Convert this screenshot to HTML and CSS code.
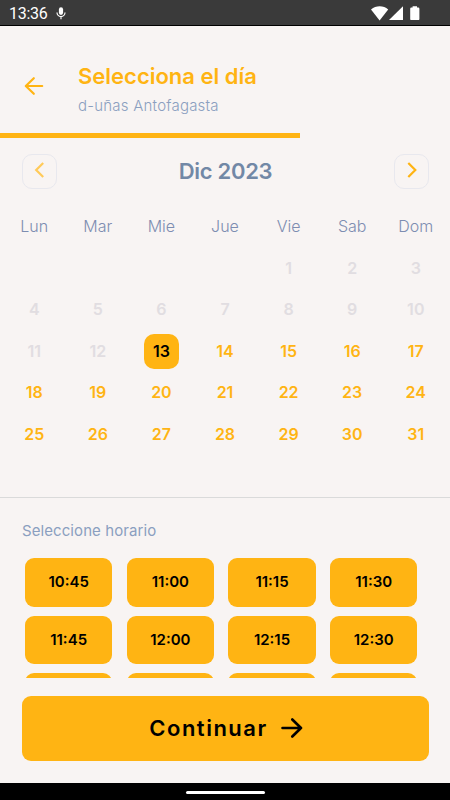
FILE: index.html
```html
<!DOCTYPE html>
<html lang="es">
  <head>
    <meta charset="utf-8">
    <title>Selecciona el día</title>
    <link rel="stylesheet" href="styles.css">
  </head>
  <body>
    <div class="status">
      <span class="clock">13:36</span>
      <svg class="mic" width="10" height="13" viewBox="0 0 10 13">
        <rect x="2.9" y="0.3" width="4.2" height="7.6" rx="2.1" fill="#fff"/>
        <path d="M1 5.6a4 4 0 0 0 8 0M5 9.6v2.6" fill="none" stroke="#fff" stroke-width="1.2"/>
      </svg>
      <svg class="signals" width="52" height="18" viewBox="0 0 52 18">
        <path d="M1 4.6C6 .2 13.5 .2 18.2 4.6L9.6 15.4z" fill="#fff"/>
        <path d="M33 1.2V15H19z" fill="#fff"/>
        <path d="M42.6 1.2h4.4v1.3h1.2q1.2 0 1.2 1.2v10.2q0 1.2-1.2 1.2h-6.8q-1.2 0-1.2-1.2V3.7q0-1.2 1.2-1.2h1.2z" fill="#fff"/>
      </svg>
    </div>

    <div class="header">
      <svg class="back" width="20" height="20" viewBox="0 0 20 20">
        <path d="M18.2 10H2M9.8 2.2L1.8 10l8 7.8" />
      </svg>
      <div>
        <h1>Selecciona el día</h1>
        <p>d-uñas Antofagasta</p>
      </div>
    </div>
    <div class="progress"></div>

    <div class="month">
      <button class="nav off"><svg width="12" height="16" viewBox="0 0 12 16"><path d="M9.2 1l-7 7 7 7"/></svg></button>
      <h2>Dic 2023</h2>
      <button class="nav"><svg width="12" height="16" viewBox="0 0 12 16"><path d="M2.3 1l7 7-7 7"/></svg></button>
    </div>

    <div class="calendar">
      <b>Lun</b><b>Mar</b><b>Mie</b><b>Jue</b><b>Vie</b><b>Sab</b><b>Dom</b>
      <i class="first">1</i><i>2</i><i>3</i>
      <i>4</i><i>5</i><i>6</i><i>7</i><i>8</i><i>9</i><i>10</i>
      <i>11</i><i>12</i><span class="today">13</span><span>14</span><span>15</span><span>16</span><span>17</span>
      <span>18</span><span>19</span><span>20</span><span>21</span><span>22</span><span>23</span><span>24</span>
      <span>25</span><span>26</span><span>27</span><span>28</span><span>29</span><span>30</span><span>31</span>
    </div>

    <div class="schedule">
      <p>Seleccione horario</p>
      <div class="hours">
        <button>10:45</button><button>11:00</button><button>11:15</button><button>11:30</button>
        <button>11:45</button><button>12:00</button><button>12:15</button><button>12:30</button>
        <button></button><button></button><button></button><button></button>
      </div>
      <button class="continue">
        <span>Continuar</span>
        <svg width="22" height="20" viewBox="0 0 22 20"><path d="M1.5 10H20M11.3 1.5L20 10l-8.7 8.5"/></svg>
      </button>
    </div>

    <div class="navbar"><div class="home"></div></div>
  </body>
</html>
```

FILE: styles.css
```css
* { box-sizing: border-box; }
body {
  margin: 0;
  width: 450px;
  height: 800px;
  overflow: hidden;
  display: flex;
  flex-direction: column;
  background: #f8f4f3;
  font-family: Inter, "Open Sans", sans-serif;
}
h1, h2, p { margin: 0; }
button {
  border: 0;
  padding: 0;
  font-family: inherit;
}
svg { display: block; }

.status {
  height: 26px;
  flex: none;
  display: flex;
  align-items: center;
  padding: 2px 28px 0 9px;
  background: #3a3a3a;
  border-bottom: 1px solid #000;
  color: #fff;
}
.clock {
  font: 16px/20px Roboto, sans-serif;
  letter-spacing: -.3px;
}
.mic { margin-left: 9px; }
.signals { margin-left: auto; }

.header {
  height: 107px;
  flex: none;
  display: flex;
  padding: 37px 0 0 24px;
}
.back {
  margin: 13px 34px 0 0;
  fill: none;
  stroke: #ffb413;
  stroke-width: 2.2;
  stroke-linecap: round;
  stroke-linejoin: round;
}
.header h1 {
  color: #ffb413;
  font-size: 22px;
  line-height: 26px;
  font-weight: 600;
}
.header p {
  margin-top: 7px;
  color: #8b9fc0;
  font-size: 15px;
  line-height: 20px;
  font-weight: 300;
  letter-spacing: .22px;
}
.progress {
  width: 300px;
  height: 5px;
  flex: none;
  background: #ffb413;
}

.month {
  height: 67px;
  flex: none;
  display: flex;
  align-items: flex-start;
  justify-content: space-between;
  padding: 16px 21px 0 22px;
}
.nav {
  width: 35px;
  height: 35px;
  display: flex;
  justify-content: center;
  padding-top: 7px;
  border: 1px solid #e8e8ee;
  border-radius: 10px;
  background: none;
}
.nav path {
  fill: none;
  stroke: #ffb413;
  stroke-width: 2.2;
}
.off path { stroke: #ffca59; }
.month h2 {
  color: #7288a6;
  font-size: 22px;
  line-height: 35px;
  font-weight: 600;
  letter-spacing: -.3px;
}

.calendar {
  height: 292px;
  flex: none;
  display: grid;
  grid-template-columns: repeat(7, 63.6px);
  grid-auto-rows: 41.6px;
  align-content: start;
  justify-content: center;
  justify-items: center;
  align-items: center;
  padding-top: .3px;
  color: #ffb413;
  font-size: 16px;
  font-weight: 600;
}
.calendar b {
  color: #7d8db1;
  font-weight: 300;
}
.calendar i {
  color: #e1dde1;
  font-style: normal;
}
.calendar .first { grid-column: 5; }
.today {
  width: 35px;
  height: 35px;
  margin-top: 1px;
  line-height: 35px;
  border-radius: 10px;
  background: #ffb413;
  color: #000;
  text-align: center;
}

.schedule {
  flex: 1;
  padding: 23px 21px 0 22px;
  border-top: 1px solid #dadada;
}
.schedule p {
  color: #8b9fc0;
  font-size: 15px;
  line-height: 20px;
  font-weight: 400;
  letter-spacing: .08px;
}
.hours {
  height: 120px;
  overflow: hidden;
  display: grid;
  grid-template-columns: repeat(4, 87.3px);
  grid-auto-rows: 48.7px;
  gap: 9px 14.4px;
  margin-top: 17px;
  padding-left: 3px;
}
.hours button {
  padding-bottom: 1px;
  border-radius: 9px;
  background: #ffb413;
  color: #000;
  font-size: 15px;
  font-weight: 600;
}
.continue {
  width: 100%;
  height: 65px;
  display: flex;
  align-items: center;
  justify-content: center;
  gap: 13px;
  margin-top: 18px;
  padding-left: 1px;
  padding-bottom: 1px;
  border-radius: 9px;
  background: #ffb413;
  color: #000;
  font-size: 22px;
  font-weight: 600;
  letter-spacing: 1.5px;
}
.continue path {
  fill: none;
  stroke: #000;
  stroke-width: 2.6;
  stroke-linecap: round;
  stroke-linejoin: round;
}

.navbar {
  height: 17.5px;
  flex: none;
  padding-top: 8px;
  background: #000;
}
.home {
  width: 79px;
  height: 3px;
  margin: 0 auto;
  border-radius: 2px;
  background: #fff;
}
```
